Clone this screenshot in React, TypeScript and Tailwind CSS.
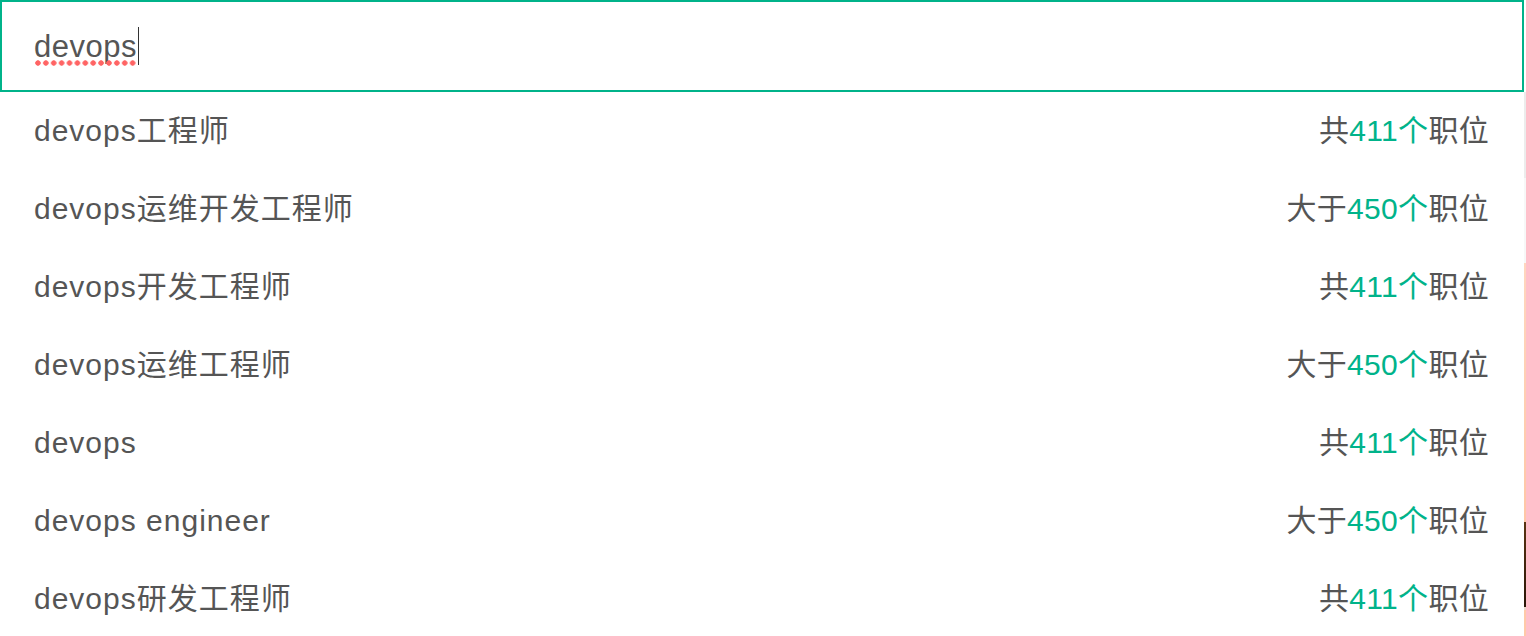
import React from "react";

type Row = { name: string; prefix: string; count: string };

const rows: Row[] = [
  { name: "devops工程师", prefix: "共", count: "411" },
  { name: "devops运维开发工程师", prefix: "大于", count: "450" },
  { name: "devops开发工程师", prefix: "共", count: "411" },
  { name: "devops运维工程师", prefix: "大于", count: "450" },
  { name: "devops", prefix: "共", count: "411" },
  { name: "devops engineer", prefix: "大于", count: "450" },
  { name: "devops研发工程师", prefix: "共", count: "411" },
];

export default function App() {
  return (
    <div
      className="flex w-[1526px] h-[636px] overflow-hidden bg-white text-[#555555]"
      style={{ fontFamily: '"Liberation Sans", "Noto Sans CJK SC", sans-serif' }}
    >
      <div className="flex flex-col w-[1524px] shrink-0">
        <div className="h-[92px] border-2 border-[#00b38a] flex items-center pl-[32px] shrink-0">
          <span className="relative text-[31px] leading-none tracking-[0.5px] text-[#555555]">
            devops
            <span className="absolute left-0 right-0 top-[29px] h-[6px] bg-[radial-gradient(circle,#ff6464_2.4px,transparent_3px)] bg-[length:7.9px_6px] bg-repeat-x" />
          </span>
          <span className="w-[1.5px] h-[38px] bg-[#333333] ml-[1px]" />
        </div>
        {rows.map((r, i) => (
          <div
            key={i}
            className="h-[78px] flex items-center justify-between pl-[34px] pr-[35px] text-[30px] leading-none shrink-0"
          >
            <span className="tracking-[1px]">{r.name}</span>
            <span className="tracking-[0.3px]">
              {r.prefix}
              <span className="text-[#00b38a]">{r.count}个</span>
              职位
            </span>
          </div>
        ))}
      </div>
      <div className="flex flex-col w-[2px] shrink-0">
        <div className="h-[92px] bg-white" />
        <div className="h-[86px] bg-[#ececec]" />
        <div className="h-[85px] bg-[#f7f7f7]" />
        <div className="h-[259px] bg-gradient-to-b from-[#ffd6bf] to-[#ffc6a6]" />
        <div className="h-[85px] bg-gradient-to-b from-[#5a3312] to-[#2a1608]" />
        <div className="h-[3px] bg-[#e8d8cc]" />
        <div className="flex-1 bg-[#ffc9a8]" />
      </div>
    </div>
  );
}
